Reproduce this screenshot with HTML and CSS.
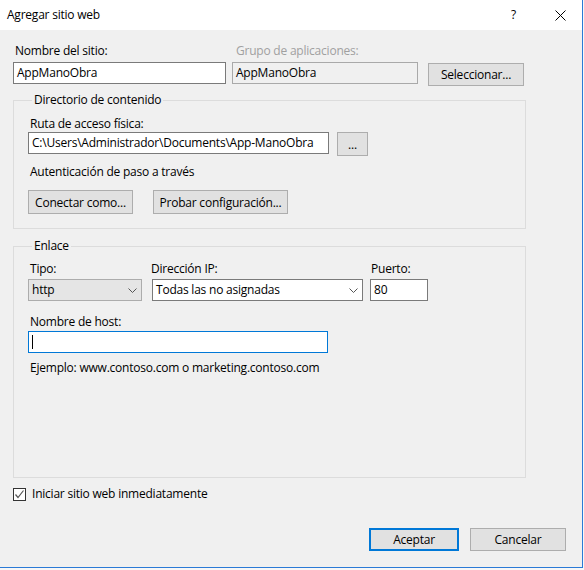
FILE: index.html
```html
<!DOCTYPE html>
<html lang="es">
<head>
<meta charset="utf-8">
<title>Agregar sitio web</title>
<link rel="stylesheet" href="styles.css">
</head>
<body>
<div class="window">
  <div class="titlebar">
    <span class="title">Agregar sitio web</span>
    <span class="tb-help">?</span>
    <span class="tb-close">
      <svg width="11" height="11" viewBox="0 0 11 11"><path d="M0.5 0.5 L10.5 10.5 M10.5 0.5 L0.5 10.5" stroke="#000" stroke-width="1" fill="none"/></svg>
    </span>
  </div>
  <div class="content">
    <div class="row1">
      <div class="field f-name">
        <label class="lbl">Nombre del sitio:</label>
        <div class="input">AppManoObra</div>
      </div>
      <div class="field f-pool">
        <label class="lbl disabled">Grupo de aplicaciones:</label>
        <div class="input readonly">AppManoObra</div>
      </div>
      <div class="btn btn-select">Seleccionar...</div>
    </div>

    <fieldset class="group g-dir">
      <legend>Directorio de contenido</legend>
      <label class="lbl">Ruta de acceso física:</label>
      <div class="path-row">
        <div class="input path">C:\Users\Administrador\Documents\App-ManoObra</div>
        <div class="btn btn-dots">...</div>
      </div>
      <div class="lbl auth">Autenticación de paso a través</div>
      <div class="btn-row">
        <div class="btn btn-connect">Conectar como...</div>
        <div class="btn btn-test">Probar configuración...</div>
      </div>
    </fieldset>

    <fieldset class="group g-bind">
      <legend>Enlace</legend>
      <div class="bind-row">
        <div class="field f-type">
          <label class="lbl">Tipo:</label>
          <div class="select gray">http<svg class="chev" width="9" height="5" viewBox="0 0 9 5"><path d="M0.5 0.5 L4.5 4.5 L8.5 0.5" stroke="#555" fill="none"/></svg></div>
        </div>
        <div class="field f-ip">
          <label class="lbl">Dirección IP:</label>
          <div class="select">Todas las no asignadas<svg class="chev" width="9" height="5" viewBox="0 0 9 5"><path d="M0.5 0.5 L4.5 4.5 L8.5 0.5" stroke="#555" fill="none"/></svg></div>
        </div>
        <div class="field f-port">
          <label class="lbl">Puerto:</label>
          <div class="input">80</div>
        </div>
      </div>
      <label class="lbl host-lbl">Nombre de host:</label>
      <div class="input host focus"><span class="caret"></span></div>
      <div class="lbl example">Ejemplo: www.contoso.com o marketing.contoso.com</div>
    </fieldset>

    <div class="check-row">
      <span class="checkbox"><svg width="11" height="11" viewBox="0 0 11 11"><path d="M1.5 5.5 L4 8.5 L9.5 1.5" stroke="#555" stroke-width="1.2" fill="none"/></svg></span>
      <span class="lbl">Iniciar sitio web inmediatamente</span>
    </div>

    <div class="footer">
      <div class="btn btn-ok">Aceptar</div>
      <div class="btn btn-cancel">Cancelar</div>
    </div>
  </div>
</div>
</body>
</html>
```
FILE: styles.css
```css
* { box-sizing: border-box; }
html, body {
  margin: 0;
  padding: 0;
  background: #f7f7f7;
}
body {
  font-family: "Open Sans", "Noto Sans", sans-serif;
  font-size: 12px;
  letter-spacing: -0.22px;
  color: #000;
  width: 584px;
  height: 570px;
  overflow: hidden;
}
.window {
  width: 583px;
  height: 568px;
  background: #f0f0f0;
  border-right: 1px solid #2b7ad6;
  border-bottom: 1px solid #2b7ad6;
  display: flex;
  flex-direction: column;
}
.titlebar {
  height: 30px;
  background: #fff;
  display: flex;
  align-items: center;
  padding-left: 7px;
  flex-shrink: 0;
}
.title { flex: 1; line-height: 16px; }
.tb-help { width: 20px; margin-right: 24px; line-height: 16px; }
.tb-close { width: 11px; margin-right: 16px; display: flex; }

.content {
  padding: 13px 0 0 13px;
  flex: 1;
  display: flex;
  flex-direction: column;
}
.lbl { display: block; line-height: 16px; white-space: nowrap; }
.lbl.disabled { color: #a0a0a0; }

.input {
  height: 22px;
  border: 1px solid #7a7a7a;
  background: #fff;
  padding: 0 3px;
  line-height: 20px;
  white-space: nowrap;
  overflow: hidden;
}
.input.readonly { background: #f0f0f0; border-color: #a9a9a9; }
.input.focus { border-color: #0078d7; }

.btn {
  height: 23px;
  border: 1px solid #adadad;
  background: #e1e1e1;
  display: flex;
  align-items: center;
  justify-content: center;
  white-space: nowrap;
}

.row1 {
  display: flex;
  align-items: flex-start;
}
.field { display: flex; flex-direction: column; }
.field .lbl { margin-left: 2px; margin-bottom: 3px; }
.f-name { width: 213px; }
.f-pool { width: 186px; margin-left: 6px; }
.f-pool .lbl { margin-left: 4px; }
.btn-select { width: 96px; margin-left: 10px; margin-top: 20px; }

.group {
  margin: 0;
  border: 1px solid #dcdcdc;
  padding: 0 0 0 14px;
  width: 513px;
  min-width: 0;
}
.group legend {
  padding: 0 2px;
  margin-left: 4px;
  line-height: 16px;
}
.g-dir { margin-top: 6px; height: 137px; }
.g-dir > .lbl { margin-top: 8px; margin-left: 2px; }
.path-row { display: flex; margin-top: 0; }
.path { width: 301px; }
.btn-dots { width: 31px; height: 24px; margin-left: 8px; }
.auth { margin-top: 0; margin-left: 2px; }
.btn-row { display: flex; margin-top: 10px; }
.btn-row .btn { height: 24px; }
.btn-connect { width: 105px; }
.btn-test { width: 135px; margin-left: 20px; }

.g-bind { margin-top: 9px; height: 240px; }
.bind-row { display: flex; margin-top: 7px; }
.bind-row .field .lbl { margin-bottom: 2px; }
.f-type { width: 114px; }
.f-ip { width: 211px; margin-left: 10px; }
.f-ip .lbl { margin-left: -1px; }
.f-port { width: 58px; margin-left: 7px; }
.f-port .lbl { margin-left: 1px; }
.select {
  height: 22px;
  border: 1px solid #7a7a7a;
  background: #fff;
  padding: 0 3px;
  line-height: 20px;
  display: flex;
  justify-content: space-between;
  align-items: center;
}
.select.gray { background: #e5e5e5; border-color: #acacac; }
.chev { margin-right: 1px; }
.host-lbl { margin-top: 13px; margin-left: 2px; }
.host { width: 300px; margin-top: 1px; display: flex; align-items: center; }
.caret { width: 1px; height: 14px; background: #000; }
.example { margin-top: 7px; margin-left: 2px; }

.check-row {
  display: flex;
  align-items: center;
  margin-top: 8px;
}
.checkbox {
  width: 13px;
  height: 13px;
  border: 1px solid #333;
  background: #fff;
  display: flex;
  align-items: center;
  justify-content: center;
}
.check-row .lbl { margin-left: 6px; }

.footer {
  display: flex;
  justify-content: flex-end;
  margin-top: 26px;
  padding-right: 16px;
}
.btn-ok { width: 90px; border: 2px solid #0078d7; }
.btn-cancel { width: 96px; margin-left: 11px; }
```
